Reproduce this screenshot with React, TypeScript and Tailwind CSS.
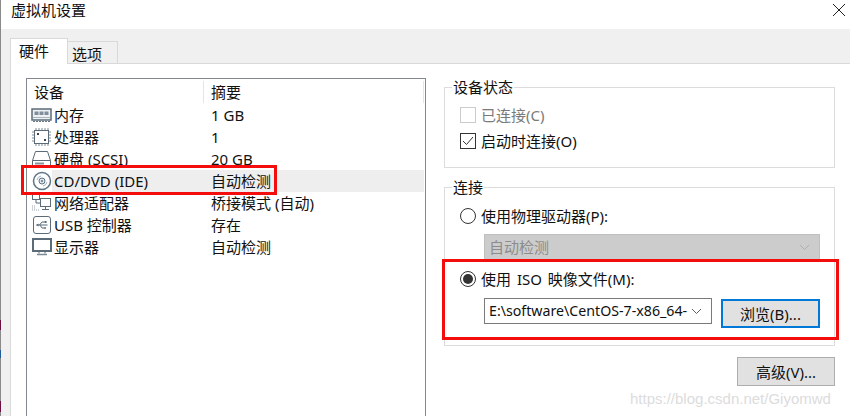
const FONT = "font-['Noto_Sans','Noto_Sans_CJK_SC',sans-serif]";

function MemoryIcon() {
  return (
    <svg width="22" height="16" viewBox="0 0 22 16" fill="none">
      <rect x="2" y="2" width="19" height="11" fill="#eef1f3" stroke="#5b6b78" strokeWidth="1.500" />
      <rect x="4.500" y="4.500" width="4" height="3.500" fill="#7f8e9a" />
      <rect x="9.500" y="4.500" width="4" height="3.500" fill="#7f8e9a" />
      <rect x="14.500" y="4.500" width="4" height="3.500" fill="#7f8e9a" />
      <path d="M3 10.500h17" stroke="#a9b4bd" />
      <path d="M3 14.500h17" stroke="#6b7a86" strokeDasharray="2 1" />
    </svg>
  );
}

function CpuIcon() {
  return (
    <svg width="22" height="20" viewBox="0 0 22 20" fill="none">
      <rect x="4.500" y="3.500" width="14" height="13" fill="#fff" stroke="#5b6b78" />
      <path d="M6 1v2M9 1v2M12 1v2M15 1v2M18 1v2M6 17v2M9 17v2M12 17v2M15 17v2M18 17v2M2 5h2M2 8h2M2 11h2M2 14h2M19 5h2M19 8h2M19 11h2M19 14h2" stroke="#7d8b97" />
      <rect x="7" y="6" width="2" height="2" fill="#39464f" />
      <rect x="14" y="12" width="2" height="2" fill="#39464f" />
    </svg>
  );
}

function DiskIcon() {
  return (
    <svg width="22" height="18" viewBox="0 0 22 18" fill="none">
      <path d="M2.500 10.500 5.500 1.500h12l3 9v5.500h-18z" fill="#fff" stroke="#5b6b78" />
      <path d="M2.500 10.500h18" stroke="#5b6b78" />
      <path d="M5 13.500h9" stroke="#8795a1" strokeWidth="2" />
    </svg>
  );
}

function CdIcon() {
  return (
    <svg width="20" height="20" viewBox="0 0 20 20" fill="none">
      <circle cx="10" cy="10" r="8.500" fill="#fff" stroke="#5c7486" strokeWidth="1.500" />
      <circle cx="10" cy="10" r="3" fill="#dfe6eb" stroke="#5c7486" />
      <circle cx="10" cy="10" r="1" fill="#5c7486" />
      <path d="M5 9a5 5 0 0 1 4-4M15 11a5 5 0 0 1-4 4" stroke="#9fb0bc" />
    </svg>
  );
}

function NetworkIcon() {
  return (
    <svg width="22" height="18" viewBox="0 0 22 18" fill="none">
      <rect x="2.500" y="0.500" width="7" height="5" fill="#fff" stroke="#5b6b78" />
      <rect x="10.500" y="4.500" width="10" height="8" fill="#fff" stroke="#5b6b78" />
      <path d="M6 6v3h4.500M15.500 13v2M12 15.500h7" stroke="#5b6b78" />
      <path d="M2 12h1M4 12h1M2 14h1M4 14h1M2 16h1M4 16h1M6 16h1M8 16h1" stroke="#9aa6af" />
    </svg>
  );
}

function UsbIcon() {
  return (
    <svg width="20" height="20" viewBox="0 0 20 20" fill="none">
      <rect x="1.500" y="1.500" width="17" height="17" rx="2.500" fill="#fff" stroke="#5b6b78" />
      <path d="M4.500 10h11M7.500 10l2.500-3h2.500M8 10l2 3h2" stroke="#5b6b78" />
      <path d="M4 10l2.500-1.500v3z" fill="#5b6b78" />
      <rect x="12.500" y="6" width="2" height="2" fill="#5b6b78" />
      <circle cx="13" cy="13" r="1" fill="#5b6b78" />
    </svg>
  );
}

function MonitorIcon() {
  return (
    <svg width="22" height="18" viewBox="0 0 22 18" fill="none">
      <rect x="3" y="1" width="18" height="12" fill="#fff" stroke="#5b6b78" strokeWidth="2" />
      <path d="M9 14v1.500M15 14v1.500" stroke="#5b6b78" />
      <path d="M7 16.500h10" stroke="#7d8b97" strokeWidth="1.500" />
    </svg>
  );
}

const rows = [
  { icon: <MemoryIcon />, name: "内存", summary: "1 GB" },
  { icon: <CpuIcon />, name: "处理器", summary: "1" },
  { icon: <DiskIcon />, name: "硬盘 (SCSI)", summary: "20 GB" },
  { icon: <CdIcon />, name: "CD/DVD (IDE)", summary: "自动检测", selected: true },
  { icon: <NetworkIcon />, name: "网络适配器", summary: "桥接模式 (自动)" },
  { icon: <UsbIcon />, name: "USB 控制器", summary: "存在" },
  { icon: <MonitorIcon />, name: "显示器", summary: "自动检测" },
];

function Chevron({ color }: { color: string }) {
  return (
    <svg width="11" height="7" viewBox="0 0 11 7" fill="none">
      <path d="M1 1l4.500 4.500L10 1" stroke={color} />
    </svg>
  );
}

function Radio({ checked }: { checked?: boolean }) {
  return (
    <span className="flex h-4 w-4 shrink-0 items-center justify-center rounded-full border border-[#333333] bg-white">
      {checked && <span className="h-[10px] w-[10px] rounded-full bg-[#333333]" />}
    </span>
  );
}

export default function App() {
  return (
    <div className={`relative flex h-[416px] w-[850px] overflow-hidden bg-white text-[15px] leading-[22px] text-[#111111] ${FONT}`}>
      {/* window edge, with bits of the window behind */}
      <div className="flex w-[1px] shrink-0 flex-col bg-[#8a8a8a]">
        <div className="h-[320px]" />
        <div className="h-[10px] bg-[#6b1040]" />
        <div className="h-[20px]" />
        <div className="h-[8px] bg-[#1f5c9e]" />
        <div className="h-[43px]" />
        <div className="h-[11px] bg-[#6b1040]" />
      </div>

      <div className="flex min-w-0 flex-1 flex-col">
        {/* Title bar */}
        <div className="flex h-[29px] shrink-0 items-center justify-between pb-[10px] pl-[10px] pr-[5px]">
          <span>虚拟机设置</span>
          <svg width="12" height="12" viewBox="0 0 12 12">
            <path d="M0 0l12 12M12 0L0 12" stroke="#222222" />
          </svg>
        </div>

        <div className="flex min-h-0 flex-1 flex-col bg-[#f0f0f0] pl-[9px] pt-[9px]">
          {/* Tabs */}
          <div className="z-10 -mb-px flex h-[26px] shrink-0 items-end">
            <div className="flex h-[26px] w-[58px] items-center border border-b-0 border-[#d9d9d9] bg-white pb-[2px] pl-[8px]">硬件</div>
            <div className="flex h-[23px] w-[50px] items-center border border-b-0 border-l-0 border-[#d9d9d9] pl-[4px] pt-[1px]">选项</div>
          </div>

          <div className="flex min-h-0 flex-1 border-l border-t border-[#d9d9d9] bg-white pl-[15px] pt-[14px]">
            {/* Device list */}
            <div className="flex w-[400px] shrink-0 flex-col border-l border-r border-t border-[#828790] pt-[1px]">
              <div className="flex h-[24px] items-center">
                <div className="w-[177px] border-r border-[#e5e5e5] pl-[7px]">设备</div>
                <div className="flex-1 border-r border-[#e5e5e5] pl-[7px]">摘要</div>
                <div className="w-[1px]" />
              </div>
              {rows.map((row) => (
                <div key={row.name} className="flex h-[22px] items-center">
                  <div className="flex w-[25px] shrink-0 justify-end">{row.icon}</div>
                  <div className={`mr-[1px] flex h-full flex-1 items-center ${row.selected ? "bg-[#eeeeee]" : ""}`}>
                    <span className="w-[159px] shrink-0 pl-[2px] whitespace-nowrap">{row.name}</span>
                    <span className="whitespace-nowrap">{row.summary}</span>
                  </div>
                </div>
              ))}
            </div>

            {/* Right column */}
            <div className="ml-[18px] flex w-[391px] shrink-0 flex-col">
              <fieldset className="h-[90px] border border-[#dcdcdc] pl-[15px]">
                <legend className="-ml-[8px] px-[1px] leading-[18px]">设备状态</legend>
                <div className="mt-[8px] flex h-[22px] items-center gap-[5px] text-[#7a7a7a]">
                  <span className="h-4 w-4 shrink-0 border border-[#cccccc]" />
                  已连接(C)
                </div>
                <div className="mt-[4px] flex h-[22px] items-center gap-[5px]">
                  <span className="flex h-4 w-4 shrink-0 items-center justify-center border border-[#333333]">
                    <svg width="12" height="10" viewBox="0 0 12 10" fill="none">
                      <path d="M1 5l3.500 3.500L11 1" stroke="#333333" />
                    </svg>
                  </span>
                  启动时连接(O)
                </div>
              </fieldset>

              <fieldset className="mt-[10px] h-[168px] border border-[#dcdcdc] pl-[15px]">
                <legend className="-ml-[8px] px-[1px] leading-[18px]">连接</legend>
                <div className="mt-[9px] flex h-[22px] items-center gap-[5px]">
                  <Radio />
                  使用物理驱动器(P):
                </div>
                <div className="mt-[7px] ml-[24px] flex h-[26px] w-[336px] items-center justify-between border border-[#bfbfbf] bg-[#cccccc] pl-[4px] pr-[9px] text-[#8c8c8c]">
                  自动检测
                  <Chevron color="#b0b0b0" />
                </div>
                <div className="mt-[8px] flex h-[22px] items-center gap-[5px] [word-spacing:2px]">
                  <Radio checked />
                  使用 ISO 映像文件(M):
                </div>
                <div className="mt-[8px] ml-[24px] flex items-start gap-[9px]">
                  <div className="flex h-[26px] w-[228px] items-center justify-between border border-[#7a7a7a] pl-[4px] pr-[9px]">
                    <span className="whitespace-nowrap text-[14.2px]">E:\software\CentOS-7-x86_64-</span>
                    <Chevron color="#606060" />
                  </div>
                  <div className="mt-[1px] flex h-[29px] w-[99px] items-center justify-center border-2 border-[#0078d7] bg-[#e1e1e1]">
                    浏览(B)...
                  </div>
                </div>
              </fieldset>

              <div className="mt-[11px] flex justify-end">
                <div className="flex h-[29px] w-[98px] items-center justify-center border border-[#adadad] bg-[#e1e1e1]">
                  高级(V)...
                </div>
              </div>
            </div>
          </div>
        </div>
      </div>

      {/* Annotation boxes drawn over the shot */}
      <div className="absolute left-[21px] top-[165px] h-[30px] w-[256px] border-[3px] border-[#f40d0d]" />
      <div className="absolute left-[442px] top-[259px] h-[81px] w-[397px] border-[3px] border-[#f40d0d]" />

      {/* Watermark */}
      <div className="absolute left-[630px] top-[388px] font-['Liberation_Sans',sans-serif] text-[15px] text-[#dcdcdc]">
        https://blog.csdn.net/Giyomwd
      </div>
    </div>
  );
}
